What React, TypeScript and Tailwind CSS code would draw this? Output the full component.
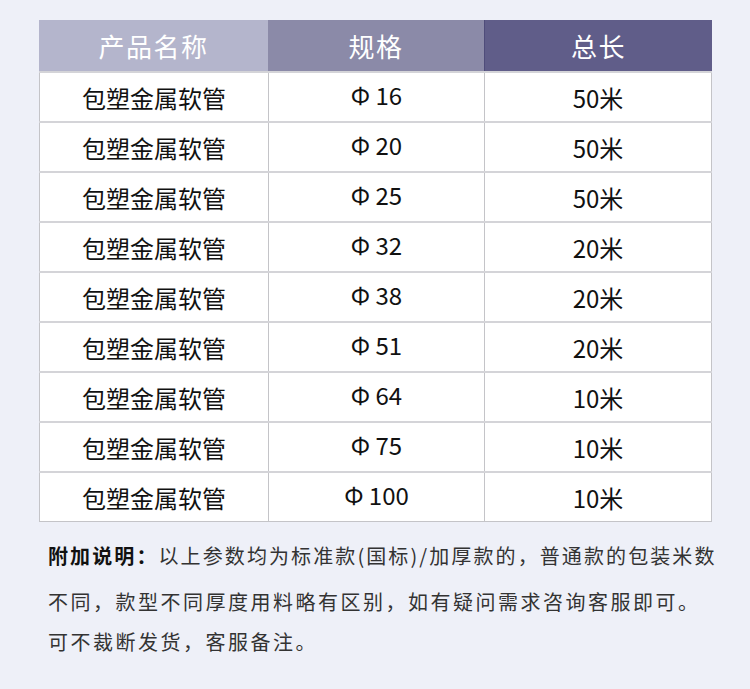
import React from 'react';

const rows: [string, string][] = [
  ['16', '50米'],
  ['20', '50米'],
  ['25', '50米'],
  ['32', '20米'],
  ['38', '20米'],
  ['51', '20米'],
  ['64', '10米'],
  ['75', '10米'],
  ['100', '10米'],
];

const font = { fontFamily: '"Noto Sans CJK SC", "Noto Sans", sans-serif' };

export default function App() {
  return (
    <div className="w-[750px] h-[689px] bg-[#eef0f8] pt-[20px] pl-[39px]" style={font}>
      <div className="w-[673px] border-b border-[#c4c4c8] bg-white">
        <div className="flex h-[51px] text-white text-[26px] tracking-[1.5px]">
          <div className="w-[229px] bg-[#b4b5cc] flex items-center justify-center">产品名称</div>
          <div className="w-[216px] bg-[#8b8aa8] flex items-center justify-center">规格</div>
          <div className="flex-1 bg-[#605d89] flex items-center justify-center border-l border-[#4f4c7a]">总长</div>
        </div>
        {rows.map(([d, len], i) => (
          <div key={i} className="flex h-[50px] border-t-2 border-[#d4d4d8] text-[24px] text-[#111]">
            <div className="w-[229px] border-l border-[#c4c4c8] flex items-center justify-center pt-[2px]">包塑金属软管</div>
            <div className="w-[216px] border-l border-[#c4c4c8] flex items-center justify-center pb-[4px]">Φ {d}</div>
            <div className="flex-1 border-x border-[#c4c4c8] flex items-center justify-center pt-[2px]">{len}</div>
          </div>
        ))}
      </div>
      <div className="pt-[11px] pl-[9px] text-[20px] leading-[46px] text-[#333] whitespace-nowrap">
        <p className="tracking-[2.1px]">
          <span className="font-bold text-[#111]">附加说明：</span>以上参数均为标准款(国标)/加厚款的，普通款的包装米数
        </p>
        <p className="tracking-[2.5px]">不同，款型不同厚度用料略有区别，如有疑问需求咨询客服即可。</p>
        <p className="-mt-[6px] tracking-[2.5px]">可不裁断发货，客服备注。</p>
      </div>
    </div>
  );
}
